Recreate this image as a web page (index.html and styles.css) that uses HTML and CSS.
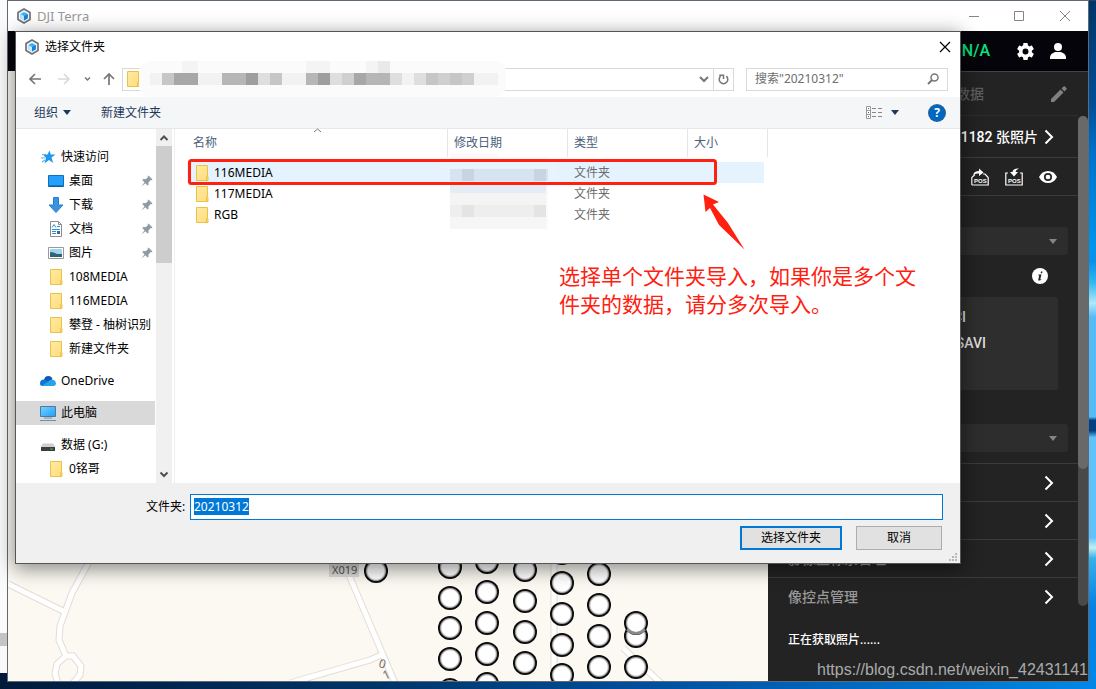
FILE: index.html
```html
<!DOCTYPE html>
<html lang="zh-CN">
<head>
<meta charset="utf-8">
<title>DJI Terra</title>
<link rel="stylesheet" href="styles.css">
</head>
<body class="desktop">
<svg class="defs" aria-hidden="true">
  <defs>
    <linearGradient id="folderFill" x1="0" y1="0" x2="1" y2="1"><stop offset="0" stop-color="#ffe9a2"/><stop offset="1" stop-color="#ffdd7c"/></linearGradient>
    <linearGradient id="screenFill" x1="0" y1="0" x2="1" y2="1"><stop offset="0" stop-color="#7cd0ff"/><stop offset="1" stop-color="#1ea0f8"/></linearGradient>
    <radialGradient id="dotFill"><stop offset="0.68" stop-color="#fff"/><stop offset="0.8" stop-color="#999"/><stop offset="0.88" stop-color="#111"/><stop offset="1" stop-color="#000"/></radialGradient>
    <symbol id="logo" viewBox="0 0 16 16"><path d="M8 1l6 3.400v7.200L8 15l-6-3.400V4.400z" fill="#f4f8fb" stroke="#6b7278" stroke-width="1.700"/><path d="M8 4l3.800 2.100v4.100L8 12.500 4.300 10.200V6z" fill="#38b4f5"/><path d="M8 8l3.800-1.900v4.100L8 12.500z" fill="#1d7fd8"/><path d="M4.300 6L8 8v4.500l-3.700-2.300z" fill="#c8e8fa"/></symbol>
    <symbol id="folder" viewBox="0 0 16 16"><path d="M2.500.5h11v10.500l.5 1v3.500h-11.500z" fill="url(#folderFill)" stroke="#e9c24a"/><path d="M12.500 15.500v-4l1-1" fill="none" stroke="#e9c24a"/></symbol>
    <symbol id="pin" viewBox="0 0 12 12"><path d="M7.500.5l4 4-1 .8-.8-.2-2.300 2.300.2 2.300-1 .8L4.300 8.300.500 11.500l3-4.200L1.300 5l1-.9 2.400.2L7 2.200l-.3-.9z" fill="#8e9aa5"/></symbol>
    <symbol id="next" viewBox="0 0 10 16"><path d="M1.500 1.500L8 8l-6.500 6.500" fill="none" stroke="#fff" stroke-width="2"/></symbol>
    <symbol id="down" viewBox="0 0 8 5"><path d="M0 0h8L4 5z" fill="currentColor"/></symbol>
  </defs>
</svg>

<div class="app">
  <header class="app-title">
    <svg class="i16"><use href="#logo"/></svg>
    <span class="app-name">DJI Terra</span>
    <svg class="win-controls" viewBox="0 0 102 12"><path d="M0 6.500h10M45.500 1.500h9v9h-9zM91 1l10 10M101 1L91 11" fill="none" stroke="#858585"/></svg>
  </header>
  <div class="app-bar">
    <span class="rtk">N/A</span>
    <svg class="gear" viewBox="2 2 20 20"><path fill="#fff" d="M19.430 12.980c.04-.32.07-.64.07-.98s-.03-.66-.07-.98l2.110-1.650c.19-.15.24-.42.12-.64l-2-3.460c-.12-.22-.39-.3-.61-.22l-2.490 1c-.52-.4-1.080-.73-1.690-.98l-.38-2.650A.49.490 0 0014 2h-4c-.25 0-.46.18-.49.42l-.38 2.650c-.61.25-1.170.59-1.690.98l-2.490-1c-.23-.09-.49 0-.61.22l-2 3.460c-.13.22-.07.49.12.64l2.110 1.650c-.04.32-.07.65-.07.98s.03.66.07.98l-2.110 1.650c-.19.15-.24.42-.12.64l2 3.460c.12.22.39.3.61.22l2.490-1c.52.4 1.080.73 1.690.98l.38 2.650c.03.24.24.42.49.42h4c.25 0 .46-.18.49-.42l.38-2.650c.61-.25 1.170-.59 1.690-.98l2.490 1c.23.09.49 0 .61-.22l2-3.460c.12-.22.07-.49-.12-.64zM12 15.500a3.500 3.500 0 110-7 3.500 3.500 0 010 7z"/></svg>
    <svg class="i16" viewBox="0 0 16 16"><circle cx="8" cy="4" r="4" fill="#fff"/><path d="M0 16v-1.500C0 11.500 3 9.500 5.500 9h5c2.500.5 5.500 2.500 5.500 5.500V16z" fill="#fff"/></svg>
  </div>
  <div class="workspace">
    <main class="map">
      <svg class="map-art" viewBox="8 71 760 610" preserveAspectRatio="xMinYMax slice">
        <g fill="none" stroke="#e2ded4" stroke-width="7">
          <path id="roads" d="M90 560L72 593 60 626l-1 14 7 16M8 584l57 28M66 656l7 0 8 10-1 9-7 8M66 656l-9 8-2 10 3 9M346 568l49 115M290 683l80-23 11-5M554 560v123M623 648l40 37"/>
        </g>
        <g fill="none" stroke="#fff" stroke-width="5"><use href="#roads"/></g>
        <rect x="329" y="563" width="30" height="14" fill="#dcdbd8"/>
        <text class="road-tag" x="332" y="574">X019</text>
        <text class="road-name" transform="translate(378 667) rotate(15)">0</text>
        <text class="road-name" transform="translate(385 680) rotate(-25)">1</text>
        <g fill="url(#dotFill)">
          <circle cx="376" cy="571" r="12"/>
          <circle cx="450" cy="567" r="12"/><circle cx="450" cy="598" r="12"/><circle cx="450" cy="628" r="12"/><circle cx="450" cy="659" r="12"/><circle cx="450" cy="690" r="12"/>
          <circle cx="487" cy="562" r="12"/><circle cx="487" cy="592" r="12"/><circle cx="487" cy="623" r="12"/><circle cx="487" cy="654" r="12"/><circle cx="487" cy="684" r="12"/>
          <circle cx="525" cy="570" r="12"/><circle cx="525" cy="601" r="12"/><circle cx="525" cy="632" r="12"/><circle cx="525" cy="663" r="12"/>
          <circle cx="562" cy="553" r="12"/><circle cx="562" cy="583" r="12"/><circle cx="562" cy="614" r="12"/><circle cx="562" cy="645" r="12"/><circle cx="562" cy="675" r="12"/>
          <circle cx="599" cy="574" r="12"/><circle cx="599" cy="605" r="12"/><circle cx="599" cy="636" r="12"/><circle cx="599" cy="667" r="12"/>
          <circle cx="636" cy="636" r="12"/><circle cx="636" cy="623" r="12"/><circle cx="636" cy="667" r="12"/>
        </g>
        <path d="M627 629.500q9 8 18 0" fill="none" stroke="#8a8a8a" stroke-width="2.500"/>
      </svg>
    </main>
    <aside class="panel">
      <div class="panel-body">
        <div class="p-row project"><span>数据</span>
          <svg class="i16" viewBox="0 0 16 16"><path d="M0 13L9.500 3.500 12.500 6.500 3 16H0zM10.500 2.500L12.500.600q.8-.6 1.500 0l1.400 1.400q.6.700 0 1.500l-1.900 2z" fill="#808080"/></svg>
        </div>
        <div class="p-row photos"><span>1182 张照片</span><svg class="chev"><use href="#next"/></svg></div>
        <div class="p-row tools">
          <svg class="tool" viewBox="0 0 18 18"><path d="M.8 17V9.500L4 6.500M12 6h2l3.200 3.500V17H.8" fill="none" stroke="#fff" stroke-width="1.200"/><path d="M2 7q1-4 6-4V0.500l4.500 4L8 8V5.500Q4.500 5 2 7z" fill="#fff"/><text x="3" y="14.500" class="pos">POS</text></svg>
          <svg class="tool" viewBox="0 0 18 18"><path d="M3 5H.8v12h16.400V5H15" fill="none" stroke="#fff" stroke-width="1.200"/><path d="M14 .5Q8 0 7.500 4H5l4 4.500L13 4h-2.500Q11 1.500 14 .5z" fill="#fff"/><text x="3" y="14.500" class="pos">POS</text></svg>
          <svg class="tool" viewBox="0 0 18 18"><path d="M0 9Q3 3 9 3t9 6q-3 6-9 6T0 9z" fill="#fff"/><circle cx="9" cy="9" r="3.200" fill="#fff" stroke="#242424" stroke-width="1.700"/></svg>
        </div>
        <div class="settings">
          <button class="drop" aria-label="选项"><svg class="arrow"><use href="#down"/></svg></button>
          <div class="info"><svg class="i16" viewBox="0 0 16 16"><circle cx="8" cy="8" r="8" fill="#fff"/><path d="M9 3.500h1.500l-.4 1.700H8.600zM6.500 6.500h3l-1.300 5 1.200-.6-.3.800q-2.600 1.600-2.900.3l1-4.500-1-.3z" fill="#242424"/></svg></div>
          <div class="indices"><span class="idx-a">NDCI</span><span class="idx-b">OSAVI</span></div>
          <button class="drop" aria-label="坐标系"><svg class="arrow"><use href="#down"/></svg></button>
        </div>
        <div class="p-row link"><svg class="chev"><use href="#next"/></svg></div>
        <div class="p-row link"><svg class="chev"><use href="#next"/></svg></div>
        <div class="p-row link"><span>影像坐标系管理</span><svg class="chev"><use href="#next"/></svg></div>
        <div class="p-row link"><span>像控点管理</span><svg class="chev"><use href="#next"/></svg></div>
        <p class="status">正在获取照片......</p>
      </div>
      <div class="p-scroll"><div class="p-thumb"></div></div>
    </aside>
  </div>
</div>

<section class="dialog" role="dialog" aria-label="选择文件夹">
  <header class="d-title">
    <svg class="i16"><use href="#logo"/></svg><span>选择文件夹</span>
    <svg class="close" viewBox="0 0 12 12"><path d="M1 1l10 10M11 1L1 11" stroke="#000" stroke-width="1.200"/></svg>
  </header>
  <div class="d-nav">
    <svg class="arrows" viewBox="0 0 88 14"><g fill="none" stroke-width="1.700"><path d="M13 7H2M7 2L2 7l5 5" stroke="#777"/><path d="M30 7h11M36 2l5 5-5 5" stroke="#dadada"/><path d="M57 5.500l2.500 2.500L62 5.500" stroke="#777" stroke-width="1.500"/><path d="M81 13V2M76 7l5-5 5 5" stroke="#777"/></g></svg>
    <div class="address"><svg class="i16"><use href="#folder"/></svg>
      <svg class="addr-drop" viewBox="0 0 10 7"><path d="M1 1l4 4 4-4" fill="none" stroke="#777" stroke-width="2"/></svg>
      <svg class="refresh" viewBox="0 0 20 21"><path d="M13 7A4.500 4.500 0 1 1 7 7M5.500 6h4.500v4" fill="none" stroke="#777" stroke-width="1.600"/></svg>
    </div>
    <div class="search"><input type="text" aria-label="搜索" placeholder='搜索"20210312"'>
      <svg class="lens" viewBox="0 0 12 12"><circle cx="7.500" cy="4.500" r="3.500" fill="none" stroke="#777" stroke-width="1.500"/><path d="M5 7L1 11" stroke="#777" stroke-width="2"/></svg></div>
  </div>
  <div class="d-tools">
    <button class="t-btn">组织 <svg class="arrow"><use href="#down"/></svg></button>
    <button class="t-btn new">新建文件夹</button>
    <button class="t-btn view" aria-label="更改视图"><svg class="view-ico" viewBox="0 0 16 13"><path d="M.5.500h4v12h-4zM.5 4.500h4M.5 8.500h4" fill="#fff" stroke="#999"/><path d="M6 2.500h4M12 2.500h4M6 6.500h4M12 6.500h4M6 10.500h4M12 10.500h4" stroke="#888"/><path d="M2 2.500h1M2 6.500h1" stroke="#36c"/><path d="M2 10.500h1" stroke="#d33"/></svg><svg class="arrow"><use href="#down"/></svg></button>
    <button class="t-btn help" aria-label="帮助">?</button>
  </div>
  <div class="d-main">
    <nav class="tree">
      <ul>
        <li class="root"><svg class="i16" viewBox="0 0 16 16"><path d="M9.500 1.500l1.300 4 4.700.1-4 2.800 1.700 5.700-4.200-3-4.600 3.500L6 9 3.500 6l4-.5z" fill="#1f97ea"/><path d="M2 5.500h4M1 9h4M2 13l3-2" stroke="#5cb4f2" stroke-width="1.200"/></svg>快速访问</li>
        <li><svg class="i16" viewBox="0 0 16 16"><path d="M.5 2.500h15v11H.5z" fill="#22a0fa" stroke="#0b70bd"/><path d="M1 12.500h14v1H1z" fill="#084e8b"/></svg>桌面<svg class="pin"><use href="#pin"/></svg></li>
        <li><svg class="i16" viewBox="0 0 16 16"><path d="M5.500.5h5V8h4.500l-7 7.500L1 8h4.500z" fill="#3a93e0" stroke="#2a7dca"/></svg>下载<svg class="pin"><use href="#pin"/></svg></li>
        <li><svg class="i16" viewBox="0 0 16 16"><path d="M2.500.5h8l3 3v12h-11z" fill="#fff" stroke="#8c8c8c"/><path d="M10.500.5v3h3" fill="none" stroke="#8c8c8c"/><path d="M4 6.500l2-3 2 3M9 5.500h3M4 8.500h8M4 10.500h4M4 12.500h4" fill="none" stroke="#2f8fd0"/><path d="M9 10h3v3H9z" fill="#3f6b9b"/></svg>文档<svg class="pin"><use href="#pin"/></svg></li>
        <li><svg class="i16" viewBox="0 0 16 16"><path d="M.5 2.500h15v11H.5z" fill="#fff" stroke="#999"/><path d="M2 4h12v8H2z" fill="#a6d0ef"/><path d="M2 7q4 0 7 2h5v3H2z" fill="#2f6478"/></svg>图片<svg class="pin"><use href="#pin"/></svg></li>
        <li><svg class="i16"><use href="#folder"/></svg>108MEDIA</li>
        <li><svg class="i16"><use href="#folder"/></svg>116MEDIA</li>
        <li><svg class="i16"><use href="#folder"/></svg>攀登 - 柚树识别</li>
        <li><svg class="i16"><use href="#folder"/></svg>新建文件夹</li>
        <li class="root"><svg class="i16" viewBox="0 0 16 16"><path d="M4 8Q4 3 8.500 3q3 0 4 3l-4 4z" fill="#0a5cb8"/><path d="M0 10.500Q0 6.500 4 6.500q4 0 6 6.500H2.500Q0 13 0 10.500z" fill="#1277d3"/><path d="M2 13l8-6q5.500-1.500 6 3.500-.3 2.500-2.500 2.500z" fill="#28a3ea"/></svg>OneDrive</li>
        <li class="root current"><svg class="i16" viewBox="0 0 16 16"><path d="M.5 1.500h15v10H.5z" fill="url(#screenFill)" stroke="#4a7ba0"/><path d="M4 13h8M0 15.500h16" stroke="#7390a8"/></svg>此电脑</li>
        <li class="root"><svg class="i16" viewBox="0 0 16 16"><path d="M3 6.500h10l2 3.500H1z" fill="#cfcfd2"/><path d="M1 10h14v4H1z" fill="#3c3e40"/><path d="M10.500 12h2" stroke="#5ae05a"/></svg>数据 (G:)</li>
        <li><svg class="i16"><use href="#folder"/></svg>0铭哥</li>
      </ul>
    </nav>
    <div class="t-scroll">
      <svg class="sc" viewBox="0 0 16 17"><path d="M4.500 11L8 7.500l3.500 3.500" fill="none" stroke="#505050" stroke-width="2"/></svg>
      <div class="t-thumb"></div>
      <svg class="sc end" viewBox="0 0 16 17"><path d="M4.500 6.500L8 10l3.500-3.500" fill="none" stroke="#505050" stroke-width="2"/></svg>
    </div>
    <div class="files">
      <table>
        <colgroup><col class="c-name"><col class="c-mid"><col class="c-mid"><col class="c-size"></colgroup>
        <thead><tr><th>名称</th><th>修改日期</th><th>类型</th><th>大小</th></tr></thead>
        <tbody>
          <tr class="sel"><td><span class="file"><svg class="i16"><use href="#folder"/></svg>116MEDIA</span></td><td></td><td>文件夹</td><td></td></tr>
          <tr><td><span class="file"><svg class="i16"><use href="#folder"/></svg>117MEDIA</span></td><td></td><td>文件夹</td><td></td></tr>
          <tr><td><span class="file"><svg class="i16"><use href="#folder"/></svg>RGB</span></td><td></td><td>文件夹</td><td></td></tr>
        </tbody>
      </table>
    </div>
  </div>
  <footer class="d-foot">
    <div class="name-row"><label for="folder-name">文件夹:</label><input id="folder-name" type="text" value="20210312"></div>
    <div class="actions"><button class="btn primary">选择文件夹</button><button class="btn">取消</button></div>
    <svg class="grip" viewBox="0 0 9 9"><path d="M6 1h2M3 4h2M6 4h2M0 7h2M3 7h2M6 7h2" stroke="#b8b8b8" stroke-width="2"/></svg>
  </footer>

  <svg class="marks" viewBox="16 32 944 531">
    <path d="M314 132l3.500-3 3.500 3" fill="none" stroke="#777"/>
    <rect x="139" y="61" width="367" height="36" rx="12" fill="#fbfbfb"/>
    <g shape-rendering="crispEdges">
      <path d="M182 61h16v12h-16zM306 61h24v12h-24zM366 61h12v12h-12z" fill="#f4f4f4"/><path d="M378 61h12v12h-12z" fill="#e9e9e9"/>
      <path d="M150 73h12v12h-12zM198 73h24v12h-24zM282 73h24v12h-24zM402 73h12v12h-12zM474 73h24v12h-24z" fill="#f2f2f2"/>
      <path d="M162 73h12v12h-12zM270 73h12v12h-12zM426 73h12v12h-12zM450 73h12v12h-12z" fill="#c6c6c6"/>
      <path d="M174 73h24v12h-24zM354 73h12v12h-12z" fill="#a7a7a7"/>
      <path d="M222 73h24v12h-24zM306 73h12v12h-12zM366 73h24v12h-24z" fill="#b6b6b6"/>
      <path d="M246 73h12v12h-12zM318 73h12v12h-12z" fill="#9e9e9e"/>
      <path d="M258 73h12v12h-12zM330 73h12v12h-12zM390 73h12v12h-12zM414 73h12v12h-12z" fill="#dedede"/>
      <path d="M342 73h12v12h-12zM438 73h12v12h-12zM462 73h12v12h-12z" fill="#cfcfcf"/>
      <path d="M450 153h48v4h50v72h-98z" fill="#fafafa"/>
      <path d="M440 162h116v7H440zM548 169h10v14h-10z" fill="#e9f3fd"/>
      <path d="M450 169h98v12h-98z" fill="#d6e3f0"/><path d="M462 169h12v12h-12zM534 169h12v12h-12z" fill="#c8d4e2"/>
      <path d="M450 181h96v12h-96z" fill="#e4ecf5"/><path d="M450 193h96v12h-96z" fill="#f4f4f4"/>
      <path d="M450 205h96v12h-96z" fill="#eee"/><path d="M462 205h12v12h-12zM534 205h12v12h-12z" fill="#e4e4e3"/><path d="M450 217h96v12h-96z" fill="#f6f6f6"/>
    </g>
    <rect x="189.500" y="160.500" width="526" height="23" rx="2" fill="none" stroke="#ff2010" stroke-width="3"/>
    <path d="M703.500 194.500L719 202l-6 2.500 15 18.500 16.500 26.500L719 225l-9-17-4.500 4z" fill="#ff2010"/>
  </svg>
  <p class="note">选择单个文件夹导入，如果你是多个文件夹的数据，请分多次导入。</p>
</section>
<div class="watermark">https://blog.csdn.net/weixin_42431141</div>
<script src="app.js"></script>
</body>
</html>
```
FILE: styles.css
```css
* { box-sizing: border-box; }
.desktop {
  margin: 0;
  padding: 1px 8px 8px;
  min-height: 100vh;
  display: flex;
  position: relative;
  overflow: hidden;
  font: 12px/16px "Noto Sans", "Noto Sans CJK SC", sans-serif;
  background:
    linear-gradient(#fafafa 0 94%, #c4c4c4 94% 96%, #f8f8f8 96%) 0 0 / 7px 673px no-repeat,
    linear-gradient(90deg, #a5a4a3 60%, #2b4263 60%) 0 0 / 100% 1px no-repeat,
    linear-gradient(#003566, #004e96 15%, #0070c8 22%, #0095ea 36%, #0a90e8 38%, #30b8f0 41%, #b0e8f8 44%, #55bbf5 46% 60.500%, #004080 61% 62.500%, #60c2f8 63.500% 78%, #c0f0f0 79.500%, #38b0e8 81%, #0a80e0 88%, #0088e8) 100% 0 / 8px 100% no-repeat,
    linear-gradient(90deg, #001a3a, #003568 35%, #0050a0 60%, #0088e8);
}
.defs { position: absolute; width: 0; height: 0; }
button, input { font: inherit; }
.i16 { width: 16px; height: 16px; flex: none; }
.arrow { width: 8px; height: 5px; flex: none; }

.app { flex: 1; min-width: 0; display: flex; flex-direction: column; background: #222; box-shadow: 0 0 0 1px #5f6a76; }
.app-title { height: 30px; padding: 0 17px 0 8px; display: flex; align-items: center; background: #fff; color: #999; }
.app-name { margin-left: 5px; flex: 1; font-size: 12px; }
.win-controls { width: 102px; height: 12px; }
.app-bar { height: 40px; padding: 0 22px 0 0; display: flex; align-items: center; justify-content: flex-end; background: #04040a; }
.rtk { font: 500 16px/20px Roboto, sans-serif; color: #08e57c; margin-right: 27px; }
.app-name { font-size: 13px; }
.gear { width: 17px; height: 17px; margin-right: 16px; }
.workspace { flex: 1; display: flex; min-height: 0; }
.map { flex: 1; position: relative; background: #fcf9f2; }
.map-art { position: absolute; width: 100%; height: 100%; }
.road-tag { font-size: 11px; fill: #555; }
.road-name { font-size: 12px; fill: #776b62; }

.panel { flex: 0 0 320px; display: flex; background: #232323; border-top: 1px solid #444; color: #fff; font: 500 14px/20px Roboto, "Noto Sans CJK SC", sans-serif; }
.panel-body { flex: 1; }
.p-row { display: flex; align-items: center; justify-content: flex-end; padding: 0 24px 0 20px; border-bottom: 1px solid #3b3b3b; }
.project { height: 44px; padding-right: 11px; gap: 67px; color: #5d5d5d; border-color: #2e2e2e; }
.photos { height: 42px; gap: 6px; }
.tools { height: 38px; padding-right: 21px; gap: 16px; }
.tool { width: 18px; height: 18px; }
.pos { font: bold 6px "Liberation Sans", sans-serif; fill: #fff; }
.chev { width: 10px; height: 16px; flex: none; }
.settings { padding: 31px 10px 11px 20px; border-bottom: 1px solid #3b3b3b; }
.drop { display: flex; width: 100%; height: 28px; padding: 0 11px; align-items: center; justify-content: flex-end; background: #2d2d2d; border: 0; border-radius: 3px; color: #858585; }
.info { display: flex; justify-content: flex-end; padding: 13px 20px 13px 0; }
.indices { height: 93px; margin: 0 10px 34px 0; padding: 10px 72px 0 0; display: flex; flex-direction: column; align-items: flex-end; gap: 6px; background: #2e2e2e; border-radius: 3px; color: #ddd; }
.idx-a { margin-right: 20px; }
.link { height: 38px; color: #999; }
.link span { flex: 1; }
.link:nth-last-child(2) { border-bottom: 0; }
.status { margin: 14px 20px; font-size: 12px; }
.p-scroll { width: 10px; margin: 44px 0 75px; background: #494949; border-radius: 5px; }
.p-thumb { height: 72%; background: #696969; border-radius: 5px; }

.dialog { position: absolute; left: 16px; right: 136px; top: 32px; background: #fff; color: #000; box-shadow: 0 0 0 1px #555, 0 4px 18px 2px rgba(0, 0, 0, .45); }
.d-title { height: 29px; padding: 0 9px 0 8px; display: flex; align-items: center; gap: 5px; }
.close { width: 12px; height: 12px; margin-left: auto; }
.d-nav { height: 36px; padding: 0 12px; display: flex; align-items: center; }
.arrows { width: 88px; height: 14px; margin-right: 6px; }
.address { flex: 1; height: 23px; display: flex; align-items: center; padding-left: 2px; border: 1px solid #d9d9d9; }
.addr-drop { width: 10px; height: 7px; margin: 0 4px 0 auto; }
.refresh { width: 20px; height: 21px; border-left: 1px solid #d9d9d9; }
.search { width: 202px; height: 23px; margin-left: 12px; padding: 0 8px; display: flex; align-items: center; border: 1px solid #d9d9d9; }
.search input { flex: 1; min-width: 0; border: 0; padding: 0; outline: 0; }
.search input::placeholder { color: #6d6d6d; }
.lens { width: 12px; height: 12px; }
.d-tools { height: 32px; padding: 0 15px 0 18px; display: flex; align-items: center; background: #f5f6f7; border-bottom: 1px solid #e6e8ea; }
.t-btn { display: flex; align-items: center; gap: 5px; padding: 0; border: 0; background: none; color: #1e395b; }
.new { margin-left: 30px; }
.view { margin-left: auto; gap: 9px; }
.view-ico { width: 16px; height: 13px; }
.help { width: 16px; height: 16px; margin-left: 30px; justify-content: center; border-radius: 50%; background: #0067c0; color: #fff; font-weight: bold; box-shadow: 0 0 0 1px #2d6195; }

.d-main { display: flex; height: 354px; overflow: hidden; }
.tree { width: 140px; overflow: hidden; padding: 16px 1px 0 0; white-space: nowrap; }
.tree ul { list-style: none; margin: 0; padding: 0; }
.tree li { height: 24px; padding-left: 32px; display: flex; align-items: center; gap: 5px; }
.tree .root { padding-left: 24px; margin-top: 8px; }
.tree .root:first-child { margin-top: 0; }
.tree .current { background: #d9d9d9; }
.pin { width: 12px; height: 12px; margin: 0 2px 0 auto; }
.t-scroll { width: 16px; display: flex; flex-direction: column; background: #f0f0f0; }
.sc { width: 16px; height: 17px; }
.t-thumb { height: 33%; background: #cdcdcd; }
.end { margin-top: auto; }
.files { flex: 1; margin-left: 2px; padding-left: 12px; border-left: 1px solid #f0f0f0; }
table { table-layout: fixed; width: 581px; border-collapse: separate; border-spacing: 0; }
.c-name { width: 261px; }
.c-mid { width: 120px; }
th { height: 28px; padding: 0 6px; text-align: left; font-weight: 400; color: #4c607a; border-right: 1px solid #e5e5e5; }
thead::after { content: ""; display: block; height: 5px; }
td { height: 21px; padding: 0 6px; color: #6d6d6d; }
td:first-child { padding-left: 7px; }
.file { display: flex; align-items: center; gap: 4px; color: #000; }
.sel td { background: #e5f3ff; }
.sel td:last-child { background: linear-gradient(#e5f3ff, #e5f3ff) 0 0 / calc(100% - 4px) 100% no-repeat; }

.d-foot { padding: 11px 17px 13px 130px; background: #f0f0f0; position: relative; }
.name-row { display: flex; align-items: center; gap: 5px; }
.name-row label { width: 39px; white-space: nowrap; }
.name-row input { flex: 1; height: 26px; padding: 0 3px 2px; border: 1px solid #0078d7; outline: 0; background: #fff; }
.name-row input::selection { background: #0078d7; color: #fff; }
.actions { display: flex; justify-content: flex-end; gap: 14px; margin-top: 6px; padding-right: 1px; }
.btn { width: 86px; height: 24px; padding: 0; border: 1px solid #adadad; background: #e1e1e1; }
.primary { width: 102px; border: 2px solid #0078d7; }
.grip { position: absolute; right: 2px; bottom: 1px; width: 9px; height: 9px; }
.marks { position: absolute; left: 0; top: 0; width: 944px; height: 531px; pointer-events: none; }
.note { position: absolute; left: 543px; top: 229px; width: 360px; margin: 0; font: 21px/28px "Noto Sans CJK SC", sans-serif; color: #ff2010; }
.watermark { position: absolute; right: 8px; bottom: 9px; font: 16px/20px "Liberation Sans", sans-serif; color: #aaa; }
```
FILE: app.js
```js
const nameBox = document.getElementById('folder-name');
nameBox.focus();
nameBox.select();
```
